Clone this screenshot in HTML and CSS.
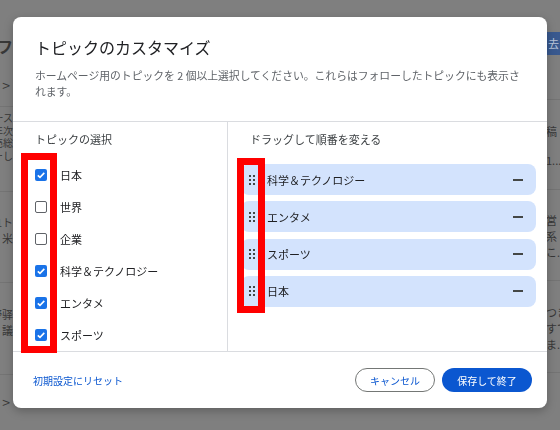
FILE: index.html
```html
<!DOCTYPE html>
<html lang="ja">

<head>
    <meta charset="UTF-8">
    <meta name="viewport" content="width=device-width, initial-scale=1.0">
    <title>トピックのカスタマイズ</title>
    <link rel="stylesheet" href="styles.css">
</head>

<body>
    <!-- page behind the dialog, only the edges show -->
    <div class="page">
        <div class="strip strip-left">
            <div class="bg-row row-a">
                <div class="ln big">ライフ</div>
                <div class="ln arrow">&gt;</div>
            </div>
            <div class="bg-row row-b">
                <div class="ln tight">ニュース</div>
                <div class="ln tight">今年次</div>
                <div class="ln tight">販売総</div>
                <div class="ln tight">ーし</div>
            </div>
            <div class="bg-row row-c">
                <div class="ln">1ト</div>
                <div class="ln">米</div>
            </div>
            <div class="bg-row row-d">
                <div class="ln">野驿</div>
                <div class="ln">議</div>
            </div>
            <div class="bg-row row-e">
                <div class="ln arrow">&gt;</div>
            </div>
        </div>
        <div class="strip strip-right">
            <div class="bg-row row-a2">
                <div class="bg-btn">去</div>
            </div>
            <div class="bg-row row-b2">
                <div class="ln">稿</div>
                <div class="ln gap">1...</div>
            </div>
            <div class="bg-row row-c">
                <div class="ln">営</div>
                <div class="ln">系</div>
                <div class="ln">こ...</div>
            </div>
            <div class="bg-row row-d">
                <div class="ln">つき</div>
                <div class="ln">すで</div>
                <div class="ln">ま...</div>
            </div>
        </div>
    </div>

    <div class="overlay">
        <div class="dialog">
            <div class="dialog-head">
                <h1 class="title">トピックのカスタマイズ</h1>
                <p class="desc">ホームページ用のトピックを 2 個以上選択してください。これらはフォローしたトピックにも表示されます。</p>
            </div>

            <div class="dialog-body">
                <div class="col-select">
                    <div class="col-title">トピックの選択</div>
                    <div class="item"><span class="box checked"><svg viewBox="0 0 12 12"><path d="M2.8 6.3 L5 8.4 L9.3 3.9"/></svg></span>日本</div>
                    <div class="item"><span class="box"></span>世界</div>
                    <div class="item"><span class="box"></span>企業</div>
                    <div class="item"><span class="box checked"><svg viewBox="0 0 12 12"><path d="M2.8 6.3 L5 8.4 L9.3 3.9"/></svg></span>科学＆テクノロジー</div>
                    <div class="item"><span class="box checked"><svg viewBox="0 0 12 12"><path d="M2.8 6.3 L5 8.4 L9.3 3.9"/></svg></span>エンタメ</div>
                    <div class="item"><span class="box checked"><svg viewBox="0 0 12 12"><path d="M2.8 6.3 L5 8.4 L9.3 3.9"/></svg></span>スポーツ</div>
                </div>

                <div class="col-order">
                    <div class="col-title order-title">ドラッグして順番を変える</div>
                    <div class="chips">
                        <div class="chip">
                            <svg class="drag" viewBox="0 0 6 10"><rect x="0" y="0" width="2" height="2"/><rect x="4" y="0" width="2" height="2"/><rect x="0" y="4" width="2" height="2"/><rect x="4" y="4" width="2" height="2"/><rect x="0" y="8" width="2" height="2"/><rect x="4" y="8" width="2" height="2"/></svg>
                            <span class="chip-name">科学＆テクノロジー</span>
                            <span class="minus"></span>
                        </div>
                        <div class="chip">
                            <svg class="drag" viewBox="0 0 6 10"><rect x="0" y="0" width="2" height="2"/><rect x="4" y="0" width="2" height="2"/><rect x="0" y="4" width="2" height="2"/><rect x="4" y="4" width="2" height="2"/><rect x="0" y="8" width="2" height="2"/><rect x="4" y="8" width="2" height="2"/></svg>
                            <span class="chip-name">エンタメ</span>
                            <span class="minus"></span>
                        </div>
                        <div class="chip">
                            <svg class="drag" viewBox="0 0 6 10"><rect x="0" y="0" width="2" height="2"/><rect x="4" y="0" width="2" height="2"/><rect x="0" y="4" width="2" height="2"/><rect x="4" y="4" width="2" height="2"/><rect x="0" y="8" width="2" height="2"/><rect x="4" y="8" width="2" height="2"/></svg>
                            <span class="chip-name">スポーツ</span>
                            <span class="minus"></span>
                        </div>
                        <div class="chip">
                            <svg class="drag" viewBox="0 0 6 10"><rect x="0" y="0" width="2" height="2"/><rect x="4" y="0" width="2" height="2"/><rect x="0" y="4" width="2" height="2"/><rect x="4" y="4" width="2" height="2"/><rect x="0" y="8" width="2" height="2"/><rect x="4" y="8" width="2" height="2"/></svg>
                            <span class="chip-name">日本</span>
                            <span class="minus"></span>
                        </div>
                    </div>
                </div>
            </div>

            <div class="dialog-foot">
                <a class="reset">初期設定にリセット</a>
                <div class="actions">
                    <button class="btn btn-cancel">キャンセル</button>
                    <button class="btn btn-save">保存して終了</button>
                </div>
            </div>

            <!-- red annotation boxes -->
            <div class="mark mark-left"></div>
            <div class="mark mark-right"></div>
        </div>
    </div>
</body>

</html>
```

FILE: styles.css
```css
* {
    box-sizing: border-box;
}

body {
    margin: 0;
    width: 560px;
    height: 430px;
    overflow: hidden;
    background-color: #7f7f7f;
    font-family: "Noto Sans CJK JP", "Noto Sans", sans-serif;
}

/* background page */
.page {
    display: flex;
    justify-content: space-between;
    height: 430px;
}

.strip {
    width: 13px;
    overflow: hidden;
    color: #383838;
    font-size: 11px;
}

.strip-right {
    width: 14px;
}

.bg-row {
    border-bottom: 1px solid #747474;
}

.ln {
    display: flex;
    white-space: nowrap;
    line-height: 16px;
}

.strip-left .ln {
    justify-content: flex-end;
}

.ln.tight {
    font-size: 10px;
    line-height: 12.5px;
}

.ln.big {
    font-size: 16px;
    line-height: 20px;
    font-weight: bold;
}

.ln.arrow {
    font-size: 14px;
    line-height: 20px;
    padding-right: 3px;
}

.ln.gap {
    margin-top: 13px;
}

.row-a {
    height: 107px;
    padding-top: 36px;
}

.row-a .arrow {
    margin-top: 19px;
}

.row-b {
    height: 85px;
    padding-top: 5px;
}

.row-c {
    height: 91px;
    padding-top: 22px;
}

.row-d {
    height: 92px;
    padding-top: 23px;
}

.row-e {
    border-bottom: none;
    padding-top: 17px;
}

.row-a2 {
    height: 100px;
    padding-top: 32px;
}

.row-b2 {
    height: 90px;
    padding-top: 23px;
}

.bg-btn {
    height: 23px;
    background-color: #39598f;
    color: #b9c6dc;
    font-size: 11px;
    line-height: 23px;
    padding-left: 2px;
}

/* dialog */
.overlay {
    position: fixed;
    inset: 0;
    display: flex;
    justify-content: center;
    padding-top: 17px;
}

.dialog {
    position: relative;
    width: 534px;
    height: 391px;
    background-color: #fff;
    border-radius: 8px;
    box-shadow: 0 3px 10px rgba(0, 0, 0, 0.25);
    display: flex;
    flex-direction: column;
}

.dialog-head {
    padding: 20px 22px 22px;
    border-bottom: 1px solid #dadce0;
}

.title {
    margin: 0;
    font-size: 16px;
    line-height: 20px;
    font-weight: 400;
    color: #202124;
}

.desc {
    margin: 10px 0 0;
    font-size: 10.8px;
    line-height: 16px;
    color: #5f6368;
}

.dialog-body {
    display: flex;
    height: 230px;
    border-bottom: 1px solid #dadce0;
}

.col-select {
    width: 215px;
    padding: 9px 0 0 22px;
    border-right: 1px solid #dadce0;
    overflow: hidden;
}

.col-title {
    font-size: 11px;
    line-height: 16px;
    color: #3c4043;
    margin-bottom: 12px;
}

.item {
    height: 32px;
    display: flex;
    align-items: center;
    gap: 13px;
    font-size: 11px;
    color: #202124;
}

.box {
    width: 12px;
    height: 12px;
    border: 1.5px solid #5f6368;
    border-radius: 2px;
    flex-shrink: 0;
}

.box.checked {
    border: none;
    background-color: #1a73e8;
}

.box svg {
    display: block;
    width: 12px;
    height: 12px;
    fill: none;
    stroke: #fff;
    stroke-width: 1.6;
}

.col-order {
    flex: 1;
    padding: 9px 11px 0 13px;
}

.order-title {
    margin-left: 9px;
    margin-bottom: 17px;
}

.chips {
    display: flex;
    flex-direction: column;
    gap: 6.33px;
}

.chip {
    height: 31px;
    background-color: #d3e3fd;
    border-radius: 8px;
    display: flex;
    align-items: center;
    padding: 0 13px 0 8px;
}

.drag {
    width: 6px;
    height: 10px;
    fill: #444746;
}

.chip-name {
    flex: 1;
    margin-left: 12px;
    font-size: 11px;
    color: #202124;
}

.minus {
    width: 10px;
    height: 2px;
    background-color: #444746;
}

.dialog-foot {
    flex: 1;
    display: flex;
    align-items: center;
    padding: 0 15px 0 20px;
}

.reset {
    font-size: 10px;
    color: #0b57d0;
}

.actions {
    margin-left: auto;
    display: flex;
    gap: 7px;
}

.btn {
    height: 24px;
    border-radius: 12px;
    font-family: inherit;
    font-size: 10px;
    padding: 0;
}

.btn-cancel {
    width: 80px;
    background-color: #fff;
    border: 1px solid #747775;
    color: #0b57d0;
}

.btn-save {
    width: 90px;
    background-color: #0b57d0;
    border: none;
    color: #fff;
}

/* annotation boxes over the screenshot */
.mark {
    position: absolute;
    border: 7px solid #f00;
}

.mark-left {
    left: 8px;
    top: 136px;
    width: 36px;
    height: 200px;
}

.mark-right {
    left: 224px;
    top: 141px;
    width: 28px;
    height: 155px;
}
```
